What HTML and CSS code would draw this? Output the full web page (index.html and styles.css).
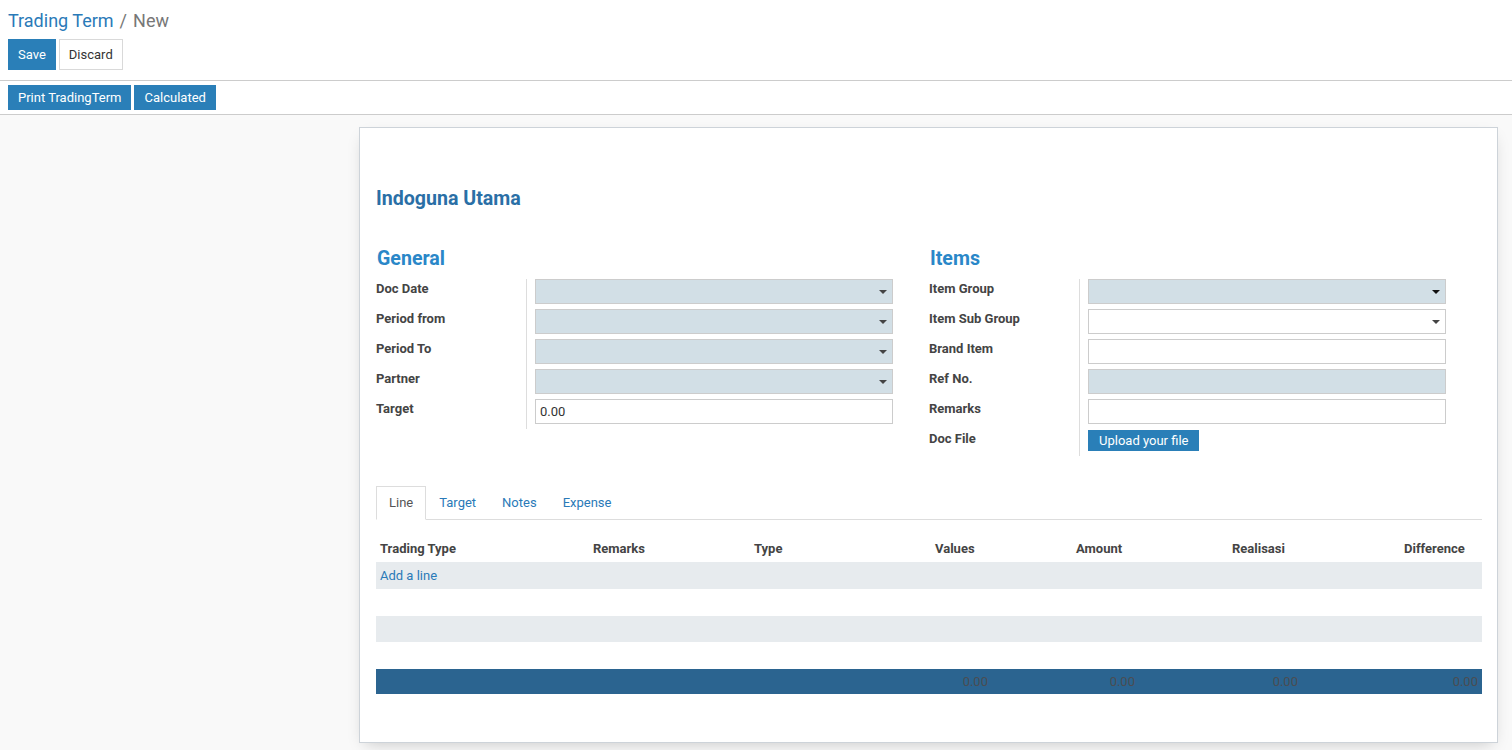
FILE: index.html
```html
<!DOCTYPE html>
<html>
<head>
<meta charset="utf-8">
<title>Trading Term</title>
<link rel="stylesheet" href="styles.css">
</head>
<body>
<div class="control-panel">
  <ol class="breadcrumb">
    <li class="bc-link">Trading Term</li>
    <li class="bc-sep">/</li>
    <li class="bc-active">New</li>
  </ol>
  <div class="cp-buttons">
    <button class="btn btn-primary">Save</button>
    <button class="btn btn-default">Discard</button>
  </div>
</div>
<div class="statusbar">
  <button class="btn btn-primary btn-sm">Print TradingTerm</button>
  <button class="btn btn-primary btn-sm">Calculated</button>
</div>
<div class="form-bg">
  <div class="sheet">
    <h1 class="title">Indoguna Utama</h1>
    <div class="groups">
      <div class="group">
        <h2 class="group-title">General</h2>
        <div class="row"><div class="label">Doc Date</div><div class="field"><div class="input select readonly"><span class="caret"></span></div></div></div>
        <div class="row"><div class="label">Period from</div><div class="field"><div class="input select readonly"><span class="caret"></span></div></div></div>
        <div class="row"><div class="label">Period To</div><div class="field"><div class="input select readonly"><span class="caret"></span></div></div></div>
        <div class="row"><div class="label">Partner</div><div class="field"><div class="input select readonly"><span class="caret"></span></div></div></div>
        <div class="row"><div class="label">Target</div><div class="field"><div class="input">0.00</div></div></div>
      </div>
      <div class="group">
        <h2 class="group-title">Items</h2>
        <div class="row"><div class="label">Item Group</div><div class="field"><div class="input select readonly"><span class="caret caret-dark"></span></div></div></div>
        <div class="row"><div class="label">Item Sub Group</div><div class="field"><div class="input select"><span class="caret"></span></div></div></div>
        <div class="row"><div class="label">Brand Item</div><div class="field"><div class="input"></div></div></div>
        <div class="row"><div class="label">Ref No.</div><div class="field"><div class="input readonly"></div></div></div>
        <div class="row"><div class="label">Remarks</div><div class="field"><div class="input"></div></div></div>
        <div class="row row-file"><div class="label">Doc File</div><div class="field"><button class="btn btn-primary btn-upload">Upload your file</button></div></div>
      </div>
    </div>

    <ul class="tabs">
      <li class="tab active">Line</li>
      <li class="tab">Target</li>
      <li class="tab">Notes</li>
      <li class="tab">Expense</li>
    </ul>

    <div class="table">
      <div class="trow thead">
        <div class="cell">Trading Type</div>
        <div class="cell">Remarks</div>
        <div class="cell">Type</div>
        <div class="cell">Values</div>
        <div class="cell">Amount</div>
        <div class="cell">Realisasi</div>
        <div class="cell">Difference</div>
      </div>
      <div class="trow odd"><div class="cell add-line">Add a line</div></div>
      <div class="trow"></div>
      <div class="trow odd short"></div>
      <div class="trow"></div>
      <div class="tfoot">
        <div class="fcell">0.00</div>
        <div class="fcell">0.00</div>
        <div class="fcell">0.00</div>
        <div class="fcell">0.00</div>
      </div>
    </div>
  </div>
</div>
</body>
</html>
```

FILE: styles.css
```css
* { box-sizing: border-box; }

html, body {
  margin: 0;
  padding: 0;
}

body {
  font-family: Roboto, "Noto Sans", "Liberation Sans", sans-serif;
  font-size: 13px;
  color: #4c4c4c;
  background: #f9f9f9;
  min-height: 750px;
}

.control-panel {
  background: #fff;
  padding: 9px 8px 10px;
  border-bottom: 1px solid #cccccc;
}

.breadcrumb {
  display: flex;
  gap: 6px;
  margin: 0;
  padding: 0;
  list-style: none;
  font-size: 18px;
  line-height: 24px;
  height: 24px;
}

.bc-link { color: #2a7ab8; }
.bc-sep, .bc-active { color: #777777; }

.cp-buttons {
  display: flex;
  gap: 3px;
  margin-top: 6px;
}

.btn {
  font-family: inherit;
  font-size: 13px;
  height: 31px;
  padding: 0 9px;
  border: 1px solid transparent;
  border-radius: 0;
  line-height: 1;
  cursor: pointer;
}

.btn-primary {
  background: #2a7fb8;
  border-color: #2a7fb8;
  color: #fff;
}

.btn-default {
  background: #fff;
  border-color: #d9d9d9;
  color: #333;
}

.statusbar {
  display: flex;
  gap: 3px;
  background: #fff;
  padding: 4px 8px;
  border-bottom: 1px solid #cccccc;
}

.btn-sm {
  height: 25px;
  padding: 0 9px;
}

.form-bg {
  padding: 12px 0 0 359px;
}

.sheet {
  width: 1139px;
  height: 616px;
  background: #fff;
  border: 1px solid #cdd3d9;
  box-shadow: 0 6px 16px -6px rgba(0, 0, 0, 0.22);
  padding: 56px 15px 0 16px;
}

.title {
  margin: 0;
  padding-top: 1px;
  font-size: 19.6px;
  line-height: 28px;
  font-weight: 700;
  color: #2a6fa6;
}

.groups {
  display: grid;
  grid-template-columns: 553px 553px;
  margin-top: 31px;
}

.group-title {
  margin: 0 0 6px 1px;
  padding-top: 1px;
  font-size: 19.6px;
  line-height: 28px;
  font-weight: 700;
  color: #2a87c8;
}

.row {
  display: grid;
  grid-template-columns: 150px 1fr;
}

.label {
  font-weight: 700;
  line-height: 20px;
  color: #444;
}

.field {
  border-left: 1px solid #dddddd;
  padding: 0 36px 5px 8px;
}

.row-file .field {
  padding-top: 1px;
}

.input {
  height: 25px;
  border: 1px solid #cccccc;
  background: #fff;
  display: flex;
  align-items: center;
  padding: 0 4px;
  color: #333;
}

.input.readonly {
  background: #d2dfe6;
}

.input.select {
  justify-content: flex-end;
  padding-right: 5px;
}

.caret {
  width: 0;
  height: 0;
  border-left: 4px solid transparent;
  border-right: 4px solid transparent;
  border-top: 4px solid #444;
}

.caret-dark {
  border-top-color: #111;
}

.btn-upload {
  height: 21px;
  padding: 0 10px;
}

.tabs {
  display: flex;
  list-style: none;
  margin: 30px 0 0;
  padding: 0;
  border-bottom: 1px solid #dddddd;
}

.tab {
  padding: 7px 12px;
  line-height: 18px;
  border: 1px solid transparent;
  margin-bottom: -1px;
  color: #2a7ab8;
}

.tab.active {
  color: #555;
  background: #fff;
  border-color: #dddddd #dddddd transparent;
}

.table {
  margin-top: 15px;
}

.trow {
  display: grid;
  grid-template-columns: 213px 161px 181px 141px 156px 172px 82px;
  height: 27px;
  align-items: center;
}

.trow.short {
  height: 26px;
}

.trow.odd {
  background: #e7ebee;
}

.thead .cell {
  font-weight: 700;
  color: #444;
}

.cell {
  padding-left: 4px;
  white-space: nowrap;
}

.add-line {
  color: #2a7ab8;
}

.tfoot {
  display: grid;
  grid-template-columns: 616px 147px 163px 180px;
  height: 25px;
  align-items: center;
  background: #2b6490;
}

.fcell {
  text-align: right;
  padding-right: 4px;
  color: #4a4d52;
}
```
